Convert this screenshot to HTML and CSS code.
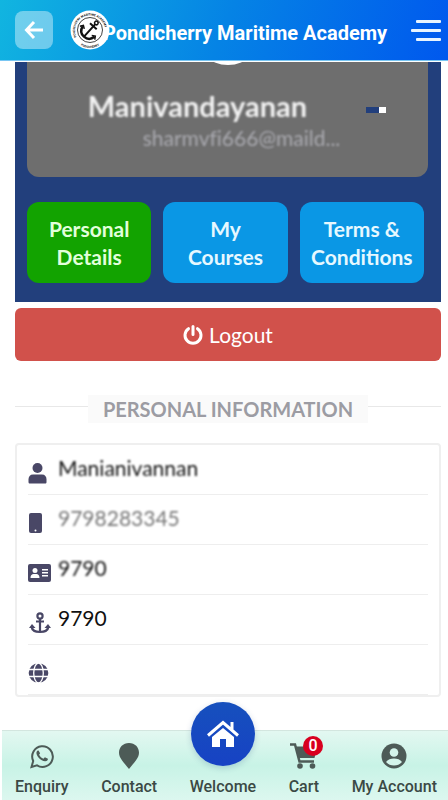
FILE: index.html
```
<!DOCTYPE html>
<html lang="en">
<head>
  <meta charset="UTF-8">
  <meta name="viewport" content="width=device-width, initial-scale=1.0">
  <title>Pondicherry Maritime Academy</title>
  <link rel="stylesheet" href="styles.css">
</head>
<body>
  <header class="topbar">
    <button class="back" type="button" aria-label="Back">
      <svg width="20" height="20" viewBox="0 0 20 20" fill="none" stroke="#fff" stroke-width="3"><path d="M10 2 2.500 10 10 18M3 10h16"/></svg>
    </button>
    <svg class="logo" width="40" height="40" viewBox="0 0 40 40">
      <defs>
        <path id="ringTop" d="M6.500 27A15 15 0 1 1 33.500 27"/>
        <path id="ringBottom" d="M8 33A17 17 0 0 0 32 33"/>
      </defs>
      <circle cx="20" cy="20" r="19.500" fill="#fff"/>
      <circle cx="20" cy="20" r="12.500" fill="none" stroke="#111" stroke-width=".8"/>
      <text class="ring-text"><textPath href="#ringTop">PONDICHERRY MARITIME ACADEMY</textPath></text>
      <text class="ring-text"><textPath href="#ringBottom" startOffset="50%" text-anchor="middle">PUDUCHERRY</textPath></text>
      <g transform="rotate(42 20 20)" fill="none" stroke="#111" stroke-width="2">
        <circle cx="20" cy="10.500" r="1.800" stroke-width="1.500"/>
        <path d="M20 12v17M15.500 15h9"/>
        <path d="M12 22c1 5 4 7 8 7s7-2 8-7" stroke-width="2.500"/>
        <path d="m10 24 2-3 3 2M30 24l-2-3-3 2" stroke-width="1.500"/>
      </g>
    </svg>
    <h1>Pondicherry Maritime Academy</h1>
    <button class="menu" type="button" aria-label="Menu"><span></span><span></span><span></span></button>
  </header>

  <main>
    <section class="profile">
      <div class="profile-card">
        <div class="avatar"></div>
        <div class="profile-name smudged">Manivandayanan</div>
        <div class="profile-email smudged">sharmvfi666@maild...</div>
        <div class="status"></div>
      </div>
      <div class="tabs">
        <button class="tab active" type="button">Personal<br>Details</button>
        <button class="tab" type="button">My<br>Courses</button>
        <button class="tab" type="button">Terms &amp;<br>Conditions</button>
      </div>
    </section>

    <button class="logout" type="button">
      <svg width="20" height="20" viewBox="0 0 20 20" fill="none" stroke="#fff" stroke-width="3" stroke-linecap="round"><path d="M10 1.500v8M5.500 3.700a8 8 0 1 0 9 0"/></svg>
      Logout
    </button>

    <div class="section-title"><h2>PERSONAL INFORMATION</h2></div>

    <ul class="info">
      <li>
        <svg width="24" height="22" viewBox="0 0 24 22"><circle cx="9.500" cy="6" r="5"/><path d="M5 12.500h9c3 0 4.500 2 4.500 5V20c0 1-.5 1.500-1.500 1.500H2C1 21.500.500 21 .500 20v-2.500c0-3 1.500-5 4.500-5z"/></svg>
        <span class="smudged">Manianivannan</span>
      </li>
      <li>
        <svg width="24" height="22" viewBox="0 0 24 22"><rect x="1" y="1" width="13" height="20" rx="2"/><circle cx="7.500" cy="18.500" r="1" fill="#fff"/></svg>
        <span class="smudged faint">9798283345</span>
      </li>
      <li>
        <svg width="24" height="22" viewBox="0 0 24 22"><rect y="2" width="23" height="18" rx="2"/><g fill="#fff"><circle cx="7" cy="8.500" r="2.500"/><path d="M2.500 16c0-3 1.500-4 3-4h3c1.500 0 3 1 3 4zM14 7h6v1.500h-6zM14 10h6v1.500h-6zM14 13h6v1.500h-6z"/></g></svg>
        <span class="smudged">9790</span>
      </li>
      <li>
        <svg width="24" height="22" viewBox="0 0 24 22"><g fill="none" stroke="#494766" stroke-width="2.200"><circle cx="12" cy="4" r="2.600"/><path d="M12 6.500V20M8 9.500h8M3.500 14.500c.5 3.500 4 5.500 8.500 5.500s8-2 8.500-5.500"/></g><path d="m1 16 3-4 3.500 4zM23 16l-3-4-3.500 4z"/></svg>
        <span>9790</span>
      </li>
      <li>
        <svg width="24" height="22" viewBox="0 0 24 22"><circle cx="10.500" cy="11" r="9.800"/><g fill="none" stroke="#fff" stroke-width="1.300"><ellipse cx="10.500" cy="11" rx="4.800" ry="10"/><path d="M0 7.500h21M0 14.500h21"/></g></svg>
        <span></span>
      </li>
    </ul>
  </main>

  <nav class="bottombar">
    <a href="#">
      <svg width="24" height="26" viewBox="0 0 24 26"><path d="m1.500 24 1.700-6A10.300 10.300 0 1 1 7 22.300z" fill="none" stroke="#4d5b57" stroke-width="2"/><path d="M8.500 7.500c-.6-.3-1.500.2-2 1.500-.8 3.500 4.500 9.500 8.800 9.300 1.700-.2 2.700-1.200 2.600-2.500l-3-1.500-1.500 1.500c-2-.8-3.300-2-4.300-4l1-1.500z"/></svg>
      Enquiry
    </a>
    <a href="#">
      <svg width="24" height="26" viewBox="0 0 24 26"><path d="M12 0c6 0 10 4.300 10 9.800C22 15 17 20 12 26 7 20 2 15 2 9.800 2 4.300 6 0 12 0z"/></svg>
      Contact
    </a>
    <a href="#" class="home">
      <span class="home-circle">
        <svg width="34" height="30" viewBox="0 0 34 30" fill="#fff"><path d="M17 9 28 18v10h-8v-8h-6v8H6V18z"/><path d="m2 16.500 15-13 15 13M26 11V3" fill="none" stroke="#fff" stroke-width="3"/></svg>
      </span>
      Welcome
    </a>
    <a href="#" class="cart">
      <svg width="30" height="26" viewBox="0 0 30 26"><path d="M1 1.500h5l4.500 17H25" fill="none" stroke="#4d5b57" stroke-width="2.500"/><path d="M6.500 3.500h22L25.500 15h-16z"/><circle cx="11" cy="23" r="2.800"/><circle cx="23.500" cy="23" r="2.800"/></svg>
      <span class="badge">0</span>
      Cart
    </a>
    <a href="#">
      <svg width="26" height="26" viewBox="0 0 26 26"><circle cx="13" cy="13" r="12.500"/><circle cx="13" cy="9.500" r="4.300" fill="#d4f5eb"/><path d="M5 19c1.500-2.500 5-3.500 8-3.500s6.500 1 8 3.500c-2 2.500-5 3.500-8 3.500S7 21.500 5 19z" fill="#d4f5eb"/></svg>
      My Account
    </a>
  </nav>
</body>
</html>
```
FILE: styles.css
```
* { box-sizing: border-box; margin: 0; padding: 0; }
body { font-family: Lato, "Open Sans", sans-serif; font-variant-ligatures: none; background: #fff; min-height: 100vh; padding: 62px 0 70px; }
button { border: none; font-family: inherit; cursor: pointer; }
h1, h2 { font-weight: normal; }

/* header */
.topbar {
  position: fixed;
  top: 0; left: 0; right: 0;
  height: 61px;
  display: flex;
  align-items: center;
  padding: 0 7px 0 15px;
  background: linear-gradient(110deg, #11b5e0, #0583e5 50%, #0058ee);
  border-bottom: 1px solid #79c6f3;
  z-index: 10;
}
.back { width: 38px; height: 38px; border-radius: 8px; background: rgba(255, 255, 255, 0.4); display: flex; align-items: center; justify-content: center; }
.logo { margin-left: 17px; flex: none; z-index: 1; }
.ring-text { font: bold 3px Roboto, sans-serif; fill: #111; }
.topbar h1 { flex: 1; margin-left: -7px; padding-top: 6px; font: bold 20px/24px Roboto, sans-serif; color: #fff; white-space: nowrap; }
.menu { width: 30px; background: none; display: flex; flex-direction: column; align-items: flex-end; gap: 6px; }
.menu span { width: 25px; height: 3px; border-radius: 1px; background: #e8f4ff; }
.menu span:nth-child(2) { width: 30px; }

main { padding: 0 7px 0 15px; }

/* profile panel */
.profile { background: #223f7c; padding: 0 13px 19px 12px; }
.profile-card {
  position: relative;
  height: 115px;
  padding-top: 28px;
  text-align: center;
  background: #6e6e6e;
  border-radius: 0 0 12px 12px;
  overflow: hidden;
}
.avatar { position: absolute; top: -65px; left: 50%; width: 68px; height: 68px; margin-left: -34px; border-radius: 50%; background: #fff; }
.profile-name { font-size: 29px; line-height: 32px; font-weight: bold; color: #f2f2f2; padding-right: 60px; }
.profile-email { font-size: 21px; line-height: 32px; color: #aaaab0; padding-left: 28px; }
.smudged { filter: blur(1px); }
.status { position: absolute; top: 45px; right: 42px; width: 20px; height: 6px; background: linear-gradient(90deg, #223f7c 65%, #fff 65%); }

.tabs { display: grid; grid-template-columns: repeat(3, 1fr); gap: 12px; margin-top: 25px; padding-right: 4px; }
.tab { height: 81px; border-radius: 12px; background: #0a97e5; color: #e6f8ff; font-size: 21px; line-height: 28px; font-weight: bold; }
.tab.active { background: #12a300; color: #e2ffdc; }

.logout {
  width: 100%;
  height: 53px;
  margin-top: 6px;
  display: flex;
  align-items: center;
  justify-content: center;
  gap: 6px;
  border-radius: 6px;
  background: #d1514b;
  color: #fff;
  font-size: 21px;
}

/* personal information */
.section-title { display: flex; margin-top: 34px; }
.section-title::before, .section-title::after { content: ""; flex: 1; height: 11px; border-bottom: 1px solid #e8e8e8; }
.section-title h2 { padding: 0 15px; background: #fafafa; color: #9c9ca3; font-size: 20px; line-height: 28px; font-weight: bold; }

.info { margin-top: 20px; padding: 0 11px; list-style: none; border: 2px solid #efefef; border-radius: 4px; }
.info li { display: flex; align-items: center; gap: 6px; height: 50px; padding-bottom: 3px; border-bottom: 1px solid #eee; font-size: 21px; line-height: 24px; color: #111; }
.info svg { fill: #494766; margin-top: 10px; }
.info .faint { color: #777; }

/* bottom menu */
.bottombar {
  position: fixed;
  left: 2px; right: 0; bottom: 0;
  height: 70px;
  display: flex;
  justify-content: space-between;
  padding: 12px 11px 0 13px;
  background: linear-gradient(#e3f8f1, #c8f3e6 50%, #dcf7ef);
  border-top: 1px solid #d3e6df;
  z-index: 10;
}
.bottombar a { position: relative; display: flex; flex-direction: column; align-items: center; gap: 8px; color: #3b4945; font: 500 16px/20px Roboto, sans-serif; text-decoration: none; white-space: nowrap; }
.bottombar svg { fill: #4d5b57; }
.bottombar .home { padding-top: 34px; }
.home-circle {
  position: absolute;
  top: -41px; left: 50%;
  width: 64px; height: 64px;
  margin-left: -32px;
  display: flex;
  align-items: center;
  justify-content: center;
  border-radius: 50%;
  background: linear-gradient(#1650bd, #1742c4);
  box-shadow: 0 2px 6px rgba(20, 60, 120, 0.2);
}
.bottombar .home-circle svg { fill: #fff; }
.badge { position: absolute; top: -7px; right: -4px; width: 20px; height: 20px; border-radius: 50%; background: #d8001f; color: #fff; font-size: 16px; line-height: 20px; text-align: center; }
```
